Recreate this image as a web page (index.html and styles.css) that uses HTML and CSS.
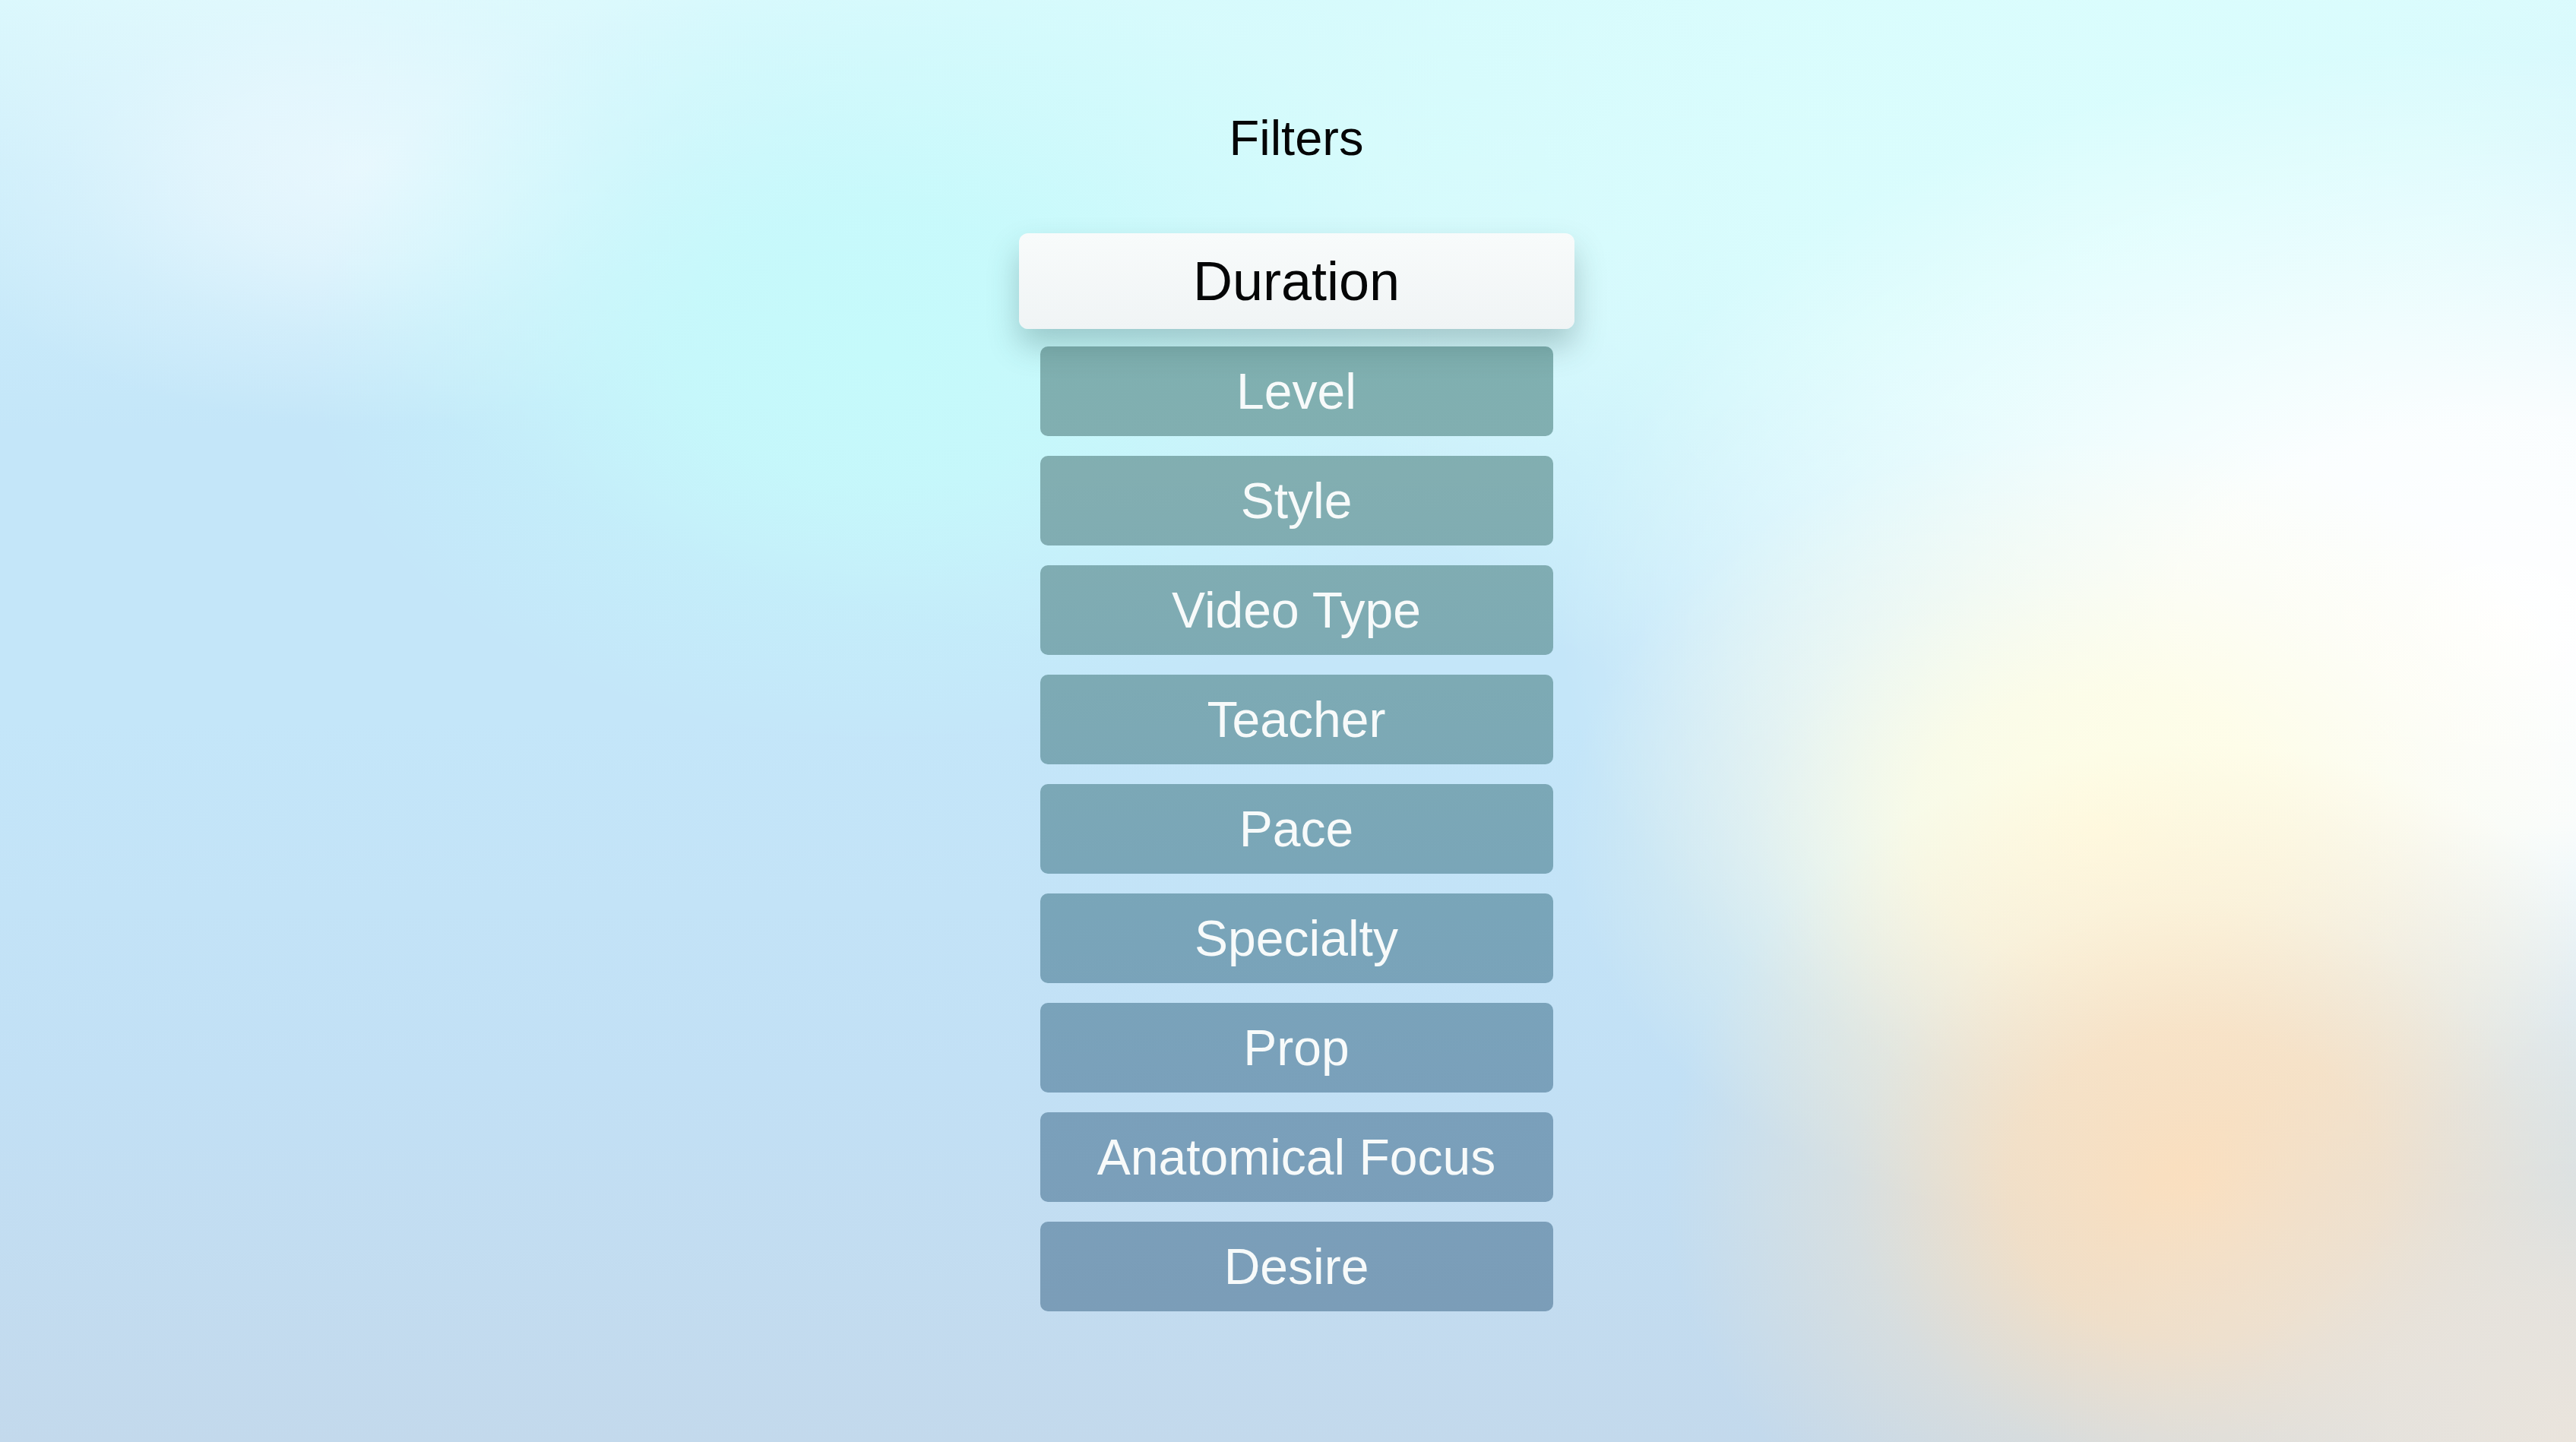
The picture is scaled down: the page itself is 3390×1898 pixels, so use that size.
FILE: index.html
```html
<!DOCTYPE html>
<html lang="en">
<head>
<meta charset="utf-8">
<title>Filters</title>
<link rel="stylesheet" href="styles.css">
</head>
<body>
<main class="page">
  <h1 class="title">Filters</h1>
  <ul class="filter-list">
    <li class="filter focused">Duration</li>
    <li class="filter">Level</li>
    <li class="filter">Style</li>
    <li class="filter">Video Type</li>
    <li class="filter">Teacher</li>
    <li class="filter">Pace</li>
    <li class="filter">Specialty</li>
    <li class="filter">Prop</li>
    <li class="filter">Anatomical Focus</li>
    <li class="filter">Desire</li>
  </ul>
</main>
</body>
</html>
```

FILE: styles.css
```css
html, body {
  margin: 0;
  padding: 0;
  width: 3390px;
  height: 1898px;
  overflow: hidden;
}

body {
  font-family: "Liberation Sans", Arial, "Helvetica Neue", sans-serif;
  background-color: #c4e6f9;
  background-image:
    radial-gradient(ellipse 700px 560px at 3390px 1898px, rgba(234,228,220,1) 0%, rgba(234,228,220,0.8) 35%, rgba(234,228,220,0.35) 65%, rgba(234,228,220,0) 100%),
    radial-gradient(ellipse 700px 580px at 2890px 1560px, rgba(251,223,190,1) 0%, rgba(251,223,190,0.8) 35%, rgba(251,225,194,0.35) 65%, rgba(251,225,194,0) 100%),
    radial-gradient(ellipse 700px 520px at 2760px 1090px, rgba(255,253,228,1) 0%, rgba(255,253,228,0.8) 35%, rgba(255,252,228,0.35) 65%, rgba(255,252,228,0) 100%),
    radial-gradient(ellipse 1250px 760px at 3300px 820px, rgba(255,255,255,1) 0%, rgba(255,255,255,0.9) 35%, rgba(255,255,255,0.45) 65%, rgba(255,255,255,0) 100%),
    radial-gradient(ellipse 1100px 820px at 2780px 240px, rgba(218,253,253,1) 0%, rgba(218,253,253,0.85) 40%, rgba(218,253,253,0.4) 70%, rgba(218,253,253,0) 100%),
    radial-gradient(ellipse 760px 520px at 1160px 460px, rgba(197,250,251,1) 0%, rgba(197,250,251,0.8) 35%, rgba(197,250,251,0.35) 65%, rgba(197,250,251,0) 100%),
    radial-gradient(ellipse 1400px 700px at 1750px 180px, rgba(214,251,252,1) 0%, rgba(214,251,252,0.8) 35%, rgba(214,251,252,0.35) 65%, rgba(214,251,252,0) 100%),
    radial-gradient(ellipse 600px 340px at 480px 220px, rgba(238,249,254,0.85) 0%, rgba(238,249,254,0.6) 35%, rgba(238,249,254,0.25) 65%, rgba(238,249,254,0) 100%),
    linear-gradient(180deg, rgba(222,250,253,0.9) 0%, rgba(214,246,252,0.5) 12%, rgba(200,236,251,0) 30%),
    linear-gradient(180deg, rgba(196,230,250,0) 50%, rgba(194,224,245,1) 75%, rgba(195,217,236,1) 100%);
  background-repeat: no-repeat;
}

.page {
  display: flex;
  flex-direction: column;
  align-items: center;
  padding-top: 142px;
  padding-left: 22px;
  box-sizing: border-box;
  width: 3390px;
  height: 1898px;
}

.title {
  margin: 0;
  font-size: 65px;
  line-height: 80px;
  font-weight: normal;
  color: #050607;
}

.filter-list {
  list-style: none;
  margin: 85px 0 0 0;
  padding: 0;
  width: 675px;
  display: flex;
  flex-direction: column;
  gap: 26px;
}

.filter {
  height: 118px;
  border-radius: 10px;
  display: flex;
  align-items: center;
  justify-content: center;
  font-size: 66px;
  color: #f7fafa;
  background: linear-gradient(180deg, #7fb0b0 0px, #7fb0b0 456px, #82aeb1 620px, #7daab4 900px, #79a5b9 1200px, #7aa0bb 1450px, #7b9db8 1726px, #7b9db8 1898px) fixed;
}

.filter.focused {
  height: 126px;
  margin: 0 -28px -3px -28px;
  border-radius: 12px;
  font-size: 72px;
  color: #050607;
  background: linear-gradient(180deg, #f8fbfb 0%, #f0f4f5 100%);
  box-shadow: 0 22px 40px rgba(40, 80, 80, 0.28);
  position: relative;
  z-index: 1;
}
```
